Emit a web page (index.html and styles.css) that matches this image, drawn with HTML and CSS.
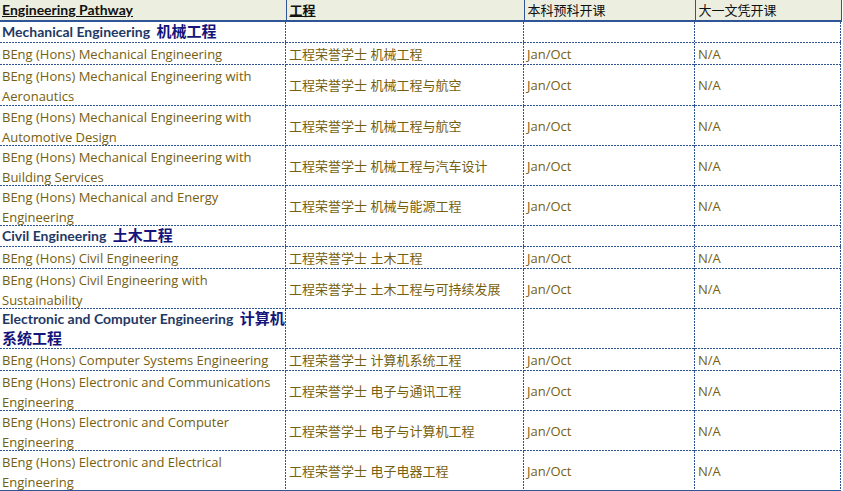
FILE: index.html
```html
<!DOCTYPE html>
<html lang="zh">
<head>
<meta charset="utf-8">
<link rel="stylesheet" href="styles.css">
</head>
<body>
<table class="grid">
  <colgroup>
    <col class="c1"><col class="c2"><col class="c3"><col class="c4">
  </colgroup>
  <thead>
    <tr class="head">
      <th><div class="cell u b lat">Engineering Pathway</div></th>
      <th><div class="cell u b">工程</div></th>
      <th><div class="cell">本科预科开课</div></th>
      <th><div class="cell">大一文凭开课</div></th>
    </tr>
  </thead>
  <tbody>
    <tr class="r0 sec"><td><div class="cell"><span class="en">Mechanical Engineering</span> <span class="zh">机械工程</span></div></td><td><div class="cell"></div></td><td><div class="cell"></div></td><td><div class="cell"></div></td></tr>
    <tr class="r1"><td><div class="cell">BEng (Hons) Mechanical Engineering</div></td><td><div class="cell">工程荣誉学士 机械工程</div></td><td><div class="cell">Jan/Oct</div></td><td><div class="cell">N/A</div></td></tr>
    <tr class="r2 first"><td><div class="cell">BEng (Hons) Mechanical Engineering with Aeronautics</div></td><td><div class="cell">工程荣誉学士 机械工程与航空</div></td><td><div class="cell">Jan/Oct</div></td><td><div class="cell">N/A</div></td></tr>
    <tr class="r2"><td><div class="cell">BEng (Hons) Mechanical Engineering with Automotive Design</div></td><td><div class="cell">工程荣誉学士 机械工程与航空</div></td><td><div class="cell">Jan/Oct</div></td><td><div class="cell">N/A</div></td></tr>
    <tr class="r2"><td><div class="cell">BEng (Hons) Mechanical Engineering with Building Services</div></td><td><div class="cell">工程荣誉学士 机械工程与汽车设计</div></td><td><div class="cell">Jan/Oct</div></td><td><div class="cell">N/A</div></td></tr>
    <tr class="r2"><td><div class="cell">BEng (Hons) Mechanical and Energy Engineering</div></td><td><div class="cell">工程荣誉学士 机械与能源工程</div></td><td><div class="cell">Jan/Oct</div></td><td><div class="cell">N/A</div></td></tr>
    <tr class="r0 sec"><td><div class="cell"><span class="en">Civil Engineering</span> <span class="zh">土木工程</span></div></td><td><div class="cell"></div></td><td><div class="cell"></div></td><td><div class="cell"></div></td></tr>
    <tr class="r1"><td><div class="cell">BEng (Hons) Civil Engineering</div></td><td><div class="cell">工程荣誉学士 土木工程</div></td><td><div class="cell">Jan/Oct</div></td><td><div class="cell">N/A</div></td></tr>
    <tr class="r2"><td><div class="cell">BEng (Hons) Civil Engineering with Sustainability</div></td><td><div class="cell">工程荣誉学士 土木工程与可持续发展</div></td><td><div class="cell">Jan/Oct</div></td><td><div class="cell">N/A</div></td></tr>
    <tr class="r2 sec"><td><div class="cell"><span class="en">Electronic and Computer Engineering</span> <span class="zh">计算机系统工程</span></div></td><td><div class="cell"></div></td><td><div class="cell"></div></td><td><div class="cell"></div></td></tr>
    <tr class="r1"><td><div class="cell">BEng (Hons) Computer Systems Engineering</div></td><td><div class="cell">工程荣誉学士 计算机系统工程</div></td><td><div class="cell">Jan/Oct</div></td><td><div class="cell">N/A</div></td></tr>
    <tr class="r2"><td><div class="cell">BEng (Hons) Electronic and Communications Engineering</div></td><td><div class="cell">工程荣誉学士 电子与通讯工程</div></td><td><div class="cell">Jan/Oct</div></td><td><div class="cell">N/A</div></td></tr>
    <tr class="r2"><td><div class="cell">BEng (Hons) Electronic and Computer Engineering</div></td><td><div class="cell">工程荣誉学士 电子与计算机工程</div></td><td><div class="cell">Jan/Oct</div></td><td><div class="cell">N/A</div></td></tr>
    <tr class="r2 last"><td><div class="cell">BEng (Hons) Electronic and Electrical Engineering</div></td><td><div class="cell">工程荣誉学士 电子电器工程</div></td><td><div class="cell">Jan/Oct</div></td><td><div class="cell">N/A</div></td></tr>
  </tbody>
</table>
</body>
</html>
```

FILE: styles.css
```css
html, body {
  margin: 0;
  padding: 0;
  background: #ffffff;
}

.grid {
  border-collapse: collapse;
  border-spacing: 0;
  table-layout: fixed;
  width: 841px;
  font-family: "Open Sans", "Noto Sans CJK SC", sans-serif;
  font-size: 13px;
  line-height: 20px;
  color: #76600f;
}

.c1 { width: 286px; }
.c2 { width: 238px; }
.c3 { width: 171px; }
.c4 { width: 146px; }

th, td {
  padding: 0;
  text-align: left;
  font-weight: normal;
}

.cell {
  box-sizing: border-box;
  display: flex;
  align-items: center;
  padding: 0 3px 1px 3px;
  white-space: nowrap;
}

.head th {
  background: #eceedf;
  border-right: 1px solid #2f5597;
  border-bottom: 2px solid #2f5597;
  color: #111111;
}

.head .cell { height: 20px; padding-bottom: 0; }
.head .b { font-weight: bold; }
.head .u { text-decoration: underline; }
.head .lat {
  font-family: "Lato", "Noto Sans CJK SC", sans-serif;
  font-size: 14px;
  padding-left: 2px;
}

td {
  background-image:
    repeating-linear-gradient(to right, #2f5597 0 2px, transparent 2px 3px),
    repeating-linear-gradient(to bottom, #2f5597 0 2px, transparent 2px 3px);
  background-size: 100% 1px, 1px 100%;
  background-position: left bottom, right top;
  background-repeat: no-repeat;
}

td:first-child .cell { padding-left: 2px; }

.r0 .cell { height: 21px; }
.r1 .cell { height: 22px; }
.r2 .cell { height: 40px; }
.r2.first .cell { height: 41px; }

.r2 td:first-child .cell {
  display: block;
  white-space: normal;
  padding-top: 1px;
}

.sec td:first-child .cell {
  display: block;
  white-space: normal;
  font-weight: bold;
  padding-right: 0;
  padding-top: 0;
}

.sec .en {
  font-family: "Lato", "Noto Sans CJK SC", sans-serif;
  font-size: 14px;
  line-height: 20px;
  color: #1f3864;
}

.sec .zh {
  font-family: "Noto Sans CJK SC", sans-serif;
  font-size: 15px;
  line-height: 18px;
  margin-left: 3px;
  color: #14147a;
}

.last td {
  background-image:
    linear-gradient(#2f5597, #2f5597),
    repeating-linear-gradient(to bottom, #2f5597 0 2px, transparent 2px 3px);
}
```
